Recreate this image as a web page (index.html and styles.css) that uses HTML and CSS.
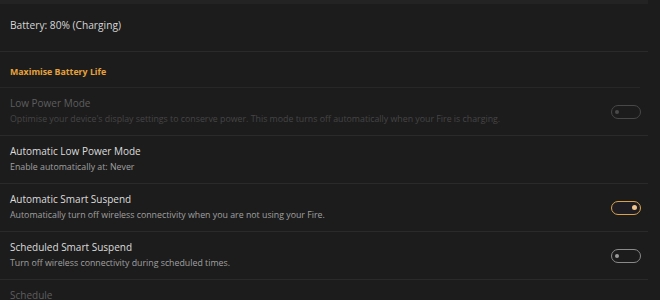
FILE: index.html
```html
<!DOCTYPE html>
<html lang="en">
	<head>
		<meta charset="UTF-8" />
		<title>Battery</title>
		<link rel="stylesheet" href="styles.css">
	</head>
	<body>
		<div class="page">
			<div class="status">Battery: 80% (Charging)</div>
			<div class="section">Maximise Battery Life</div>
			<div class="row disabled">
				<div class="text">
					<div class="name">Low Power Mode</div>
					<div class="desc">Optimise your device's display settings to conserve power. This mode turns off automatically when your Fire is charging.</div>
				</div>
				<div class="switch"><span class="knob"></span></div>
			</div>
			<div class="row">
				<div class="text">
					<div class="name">Automatic Low Power Mode</div>
					<div class="desc">Enable automatically at: Never</div>
				</div>
			</div>
			<div class="row">
				<div class="text">
					<div class="name">Automatic Smart Suspend</div>
					<div class="desc">Automatically turn off wireless connectivity when you are not using your Fire.</div>
				</div>
				<div class="switch on"><span class="knob"></span></div>
			</div>
			<div class="row">
				<div class="text">
					<div class="name">Scheduled Smart Suspend</div>
					<div class="desc">Turn off wireless connectivity during scheduled times.</div>
				</div>
				<div class="switch"><span class="knob"></span></div>
			</div>
			<div class="row disabled last">
				<div class="text">
					<div class="name">Schedule</div>
				</div>
			</div>
		</div>
	</body>
</html>
```

FILE: styles.css
```css
body,
html {
	margin: 0;
	height: 100%;
	background-color: #1c1c1c;
	font-family: "Open Sans", "Noto Sans", sans-serif;
	overflow: hidden;
}

.page {
	width: 648px;
	border-top: 4px solid #232323;
}

.status {
	height: 47px;
	line-height: 43px;
	padding-left: 10px;
	font-size: 10.2px;
	color: #d6d6d6;
	border-bottom: 1px solid #2a2a2a;
}

.section {
	height: 35px;
	line-height: 40px;
	padding-left: 10px;
	font-size: 8.8px;
	font-weight: bold;
	color: #e6a23c;
	border-bottom: 1px solid #272727;
	margin-right: 8px;
}

.row {
	display: flex;
	align-items: center;
	height: 47px;
	padding: 0 7px 0 10px;
	border-bottom: 1px solid #2a2a2a;
}

.row.last {
	border-bottom: none;
	align-items: flex-start;
}

.text {
	flex: 1;
	padding-bottom: 2px;
}

.name {
	font-size: 10px;
	line-height: 14px;
	color: #dcdcdc;
}

.desc {
	font-size: 8.8px;
	line-height: 12px;
	margin-top: 3px;
	color: #a0a0a0;
}

.disabled .name {
	color: #5e5e5e;
}

.disabled .desc {
	color: #454545;
}

.last .name {
	margin-top: 8px;
}

.switch {
	height: 12px;
	width: 22px;
	border: 1.5px solid #8a8a8a;
	border-radius: 8px;
	display: flex;
	align-items: center;
	padding: 0 3px;
	box-sizing: content-box;
}

.knob {
	width: 4px;
	height: 4px;
	border-radius: 50%;
	background-color: #9a9a9a;
}

.switch.on {
	border-color: #d9a24a;
	background-color: #1f1d22;
	justify-content: flex-end;
}

.switch.on .knob {
	width: 5px;
	height: 5px;
	background-color: #f0c48a;
}

.disabled .switch {
	border-color: #484848;
}

.disabled .knob {
	background-color: #4a4a4a;
}
```
